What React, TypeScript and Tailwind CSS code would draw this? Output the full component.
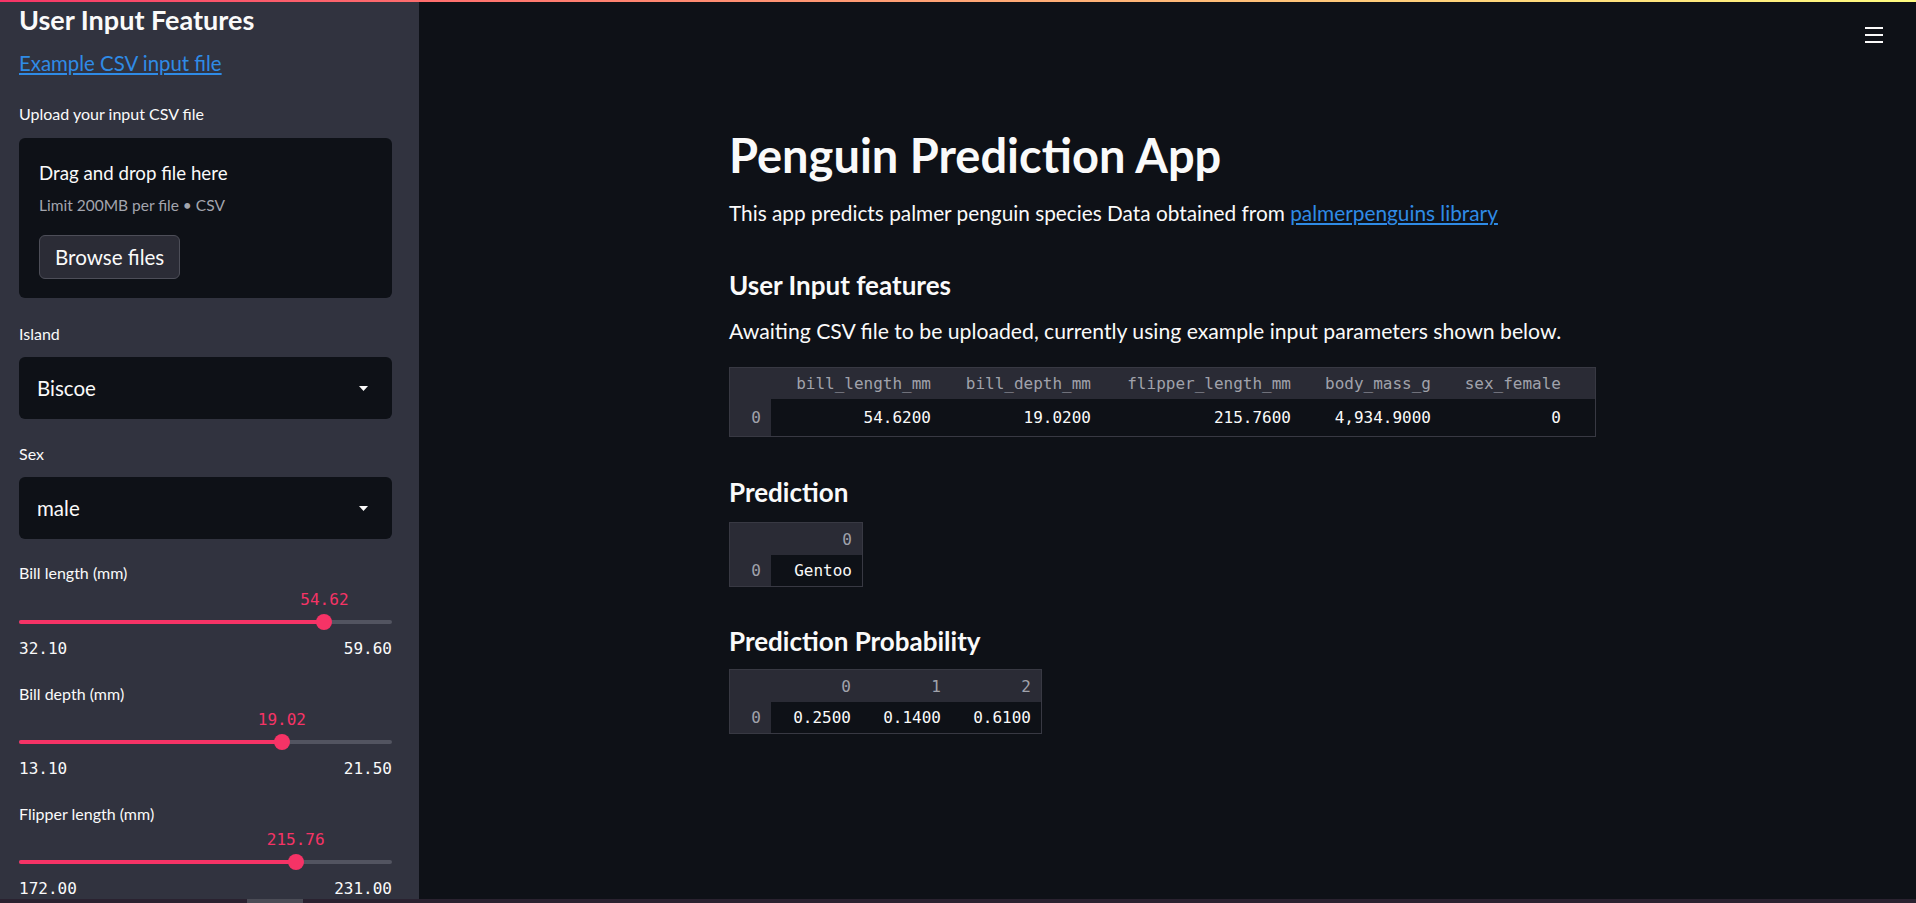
import React from 'react';

type SliderProps = { label: string; min: number; max: number; value: number; first?: boolean };

const Slider: React.FC<SliderProps> = ({ label, min, max, value, first }) => {
  const pct = ((value - min) / (max - min)) * 100;
  return (
    <div className={first ? 'mt-[24px]' : 'mt-[26px]'}>
      <div className="text-[16px] leading-[1.2]">{label}</div>
      <div className="relative mt-[7px] h-[19px]">
        <span
          className="absolute top-0 -translate-x-1/2 font-['DejaVu_Sans_Mono',monospace] text-[16px] leading-[1.2] text-[#f63366]"
          style={{ left: `${pct}%` }}
        >
          {value.toFixed(2)}
        </span>
      </div>
      <div className="relative mt-[11px] h-[4px] rounded-full bg-[#525460]">
        <div className="h-full rounded-full bg-[#f63366]" style={{ width: `${pct}%` }} />
        <div
          className="absolute top-1/2 h-4 w-4 -translate-x-1/2 -translate-y-1/2 rounded-full bg-[#f63366]"
          style={{ left: `${pct}%` }}
        />
      </div>
      <div className="mt-[15px] flex justify-between font-['DejaVu_Sans_Mono',monospace] text-[16px] leading-[1.2]">
        <span>{min.toFixed(2)}</span>
        <span>{max.toFixed(2)}</span>
      </div>
    </div>
  );
};

const SelectBox: React.FC<{ label: string; value: string; gap: string }> = ({ label, value, gap }) => (
  <div className={gap}>
    <div className="text-[16px] leading-[1.2]">{label}</div>
    <div className="mt-[14px] flex h-[62px] items-center justify-between rounded-md bg-[#0e1117] pl-[18px] pr-[24px]">
      <span className="text-[20.5px] leading-[1.2]">{value}</span>
      <svg width="9" height="5" viewBox="0 0 9 5">
        <polygon points="0,0 9,0 4.5,5" fill="#fafafa" />
      </svg>
    </div>
  </div>
);

type TableProps = {
  grid: string;
  headers: string[];
  row: string[];
  headH: string;
  bodyH: string;
  filler?: boolean;
};

const DataTable: React.FC<TableProps> = ({ grid, headers, row, headH, bodyH, filler }) => (
  <div className="w-fit border border-[#383943] font-['DejaVu_Sans_Mono',monospace] text-[16px] leading-[1.2]">
    <div className={`${grid} ${headH} bg-[#2a2b35] text-[#a0a2ab]`}>
      <div />
      {headers.map((h) => (
        <div key={h} className="flex items-center justify-end pr-[10px]">
          {h}
        </div>
      ))}
      {filler && <div />}
    </div>
    <div className={`${grid} ${bodyH}`}>
      <div className="flex items-center justify-end bg-[#2a2b35] pr-[10px] text-[#a0a2ab]">0</div>
      {row.map((v, i) => (
        <div key={i} className="flex items-center justify-end pr-[10px] text-[#fafafa]">
          {v}
        </div>
      ))}
      {filler && <div />}
    </div>
  </div>
);

export default function App() {
  return (
    <div className="flex h-[903px] w-full flex-col overflow-hidden bg-[#0e1117] font-['Lato','Noto_Sans',sans-serif] text-[#fafafa]">
      <div className="h-[2px] shrink-0 bg-gradient-to-r from-[#f63366] to-[#fffd80]" />

      <div className="flex min-h-0 flex-1">
        {/* Sidebar */}
        <aside className="w-[419px] shrink-0 overflow-hidden bg-[#31333f] pl-[19px] pr-[27px] pt-[2px]">
          <h2 className="text-[27px] font-bold leading-[1.2]">User Input Features</h2>
          <a href="#" className="mt-[15px] block w-fit text-[20.4px] leading-[1.2] text-[#2f8be6] underline">
            Example CSV input file
          </a>
          <div className="mt-[28px] text-[16px] leading-[1.2]">Upload your input CSV file</div>
          <div className="mt-[15px] rounded-md bg-[#0e1117] pb-[19px] pl-[20px] pt-[24px]">
            <div className="text-[18.7px] leading-[1.2]">Drag and drop file here</div>
            <div className="mt-[11px] text-[15.5px] leading-[1.2] text-[#a3a5ae]">Limit 200MB per file • CSV</div>
            <button className="mt-[21px] h-[44px] rounded-md border border-[#4d4e58] bg-[#2b2c36] px-[15px] text-[20.6px] leading-[1.2] text-[#fafafa]">
              Browse files
            </button>
          </div>

          <SelectBox label="Island" value="Biscoe" gap="mt-[26px]" />
          <SelectBox label="Sex" value="male" gap="mt-[25px]" />

          <Slider label="Bill length (mm)" min={32.1} max={59.6} value={54.62} first />
          <Slider label="Bill depth (mm)" min={13.1} max={21.5} value={19.02} />
          <Slider label="Flipper length (mm)" min={172} max={231} value={215.76} />
        </aside>

        {/* Main */}
        <main className="flex min-w-0 flex-1 flex-col">
          <header className="flex h-[66px] shrink-0 items-center justify-end pr-[33px]">
            <div className="flex w-[18px] flex-col gap-[5px]">
              <span className="h-[2px] bg-[#fafafa]" />
              <span className="h-[2px] bg-[#fafafa]" />
              <span className="h-[2px] bg-[#fafafa]" />
            </div>
          </header>

          <div className="mx-auto w-[877px] pt-[59px]">
            <h1 className="text-[47px] font-bold leading-[1.2]">Penguin Prediction App</h1>
            <p className="mt-[18px] text-[20.8px] leading-[1.2]">
              This app predicts palmer penguin species Data obtained from{' '}
              <a href="#" className="text-[#2f8be6] underline">
                palmerpenguins library
              </a>
            </p>

            <h3 className="mt-[44px] text-[26px] font-bold leading-[1.2]">User Input features</h3>
            <p className="mt-[17px] text-[21.2px] leading-[1.2]">
              Awaiting CSV file to be uploaded, currently using example input parameters shown below.
            </p>
            <div className="mt-[23px]">
              <DataTable
                grid="grid grid-cols-[41px_170px_160px_200px_140px_130px_24px]"
                headers={['bill_length_mm', 'bill_depth_mm', 'flipper_length_mm', 'body_mass_g', 'sex_female']}
                row={['54.6200', '19.0200', '215.7600', '4,934.9000', '0']}
                headH="h-[31px]"
                bodyH="h-[37px]"
                filler
              />
            </div>

            <h3 className="mt-[40px] text-[26px] font-bold leading-[1.2]">Prediction</h3>
            <div className="mt-[14px]">
              <DataTable
                grid="grid grid-cols-[41px_91px]"
                headers={['0']}
                row={['Gentoo']}
                headH="h-[32px]"
                bodyH="h-[31px]"
              />
            </div>

            <h3 className="mt-[39px] text-[26px] font-bold leading-[1.2]">Prediction Probability</h3>
            <div className="mt-[12px]">
              <DataTable
                grid="grid grid-cols-[41px_90px_90px_90px]"
                headers={['0', '1', '2']}
                row={['0.2500', '0.1400', '0.6100']}
                headH="h-[32px]"
                bodyH="h-[31px]"
              />
            </div>
          </div>
        </main>
      </div>

      <div className="flex h-[4px] shrink-0 bg-[#2a2230]">
        <div className="ml-[247px] h-full w-[56px] bg-[#4b4c56]" />
      </div>
    </div>
  );
}
